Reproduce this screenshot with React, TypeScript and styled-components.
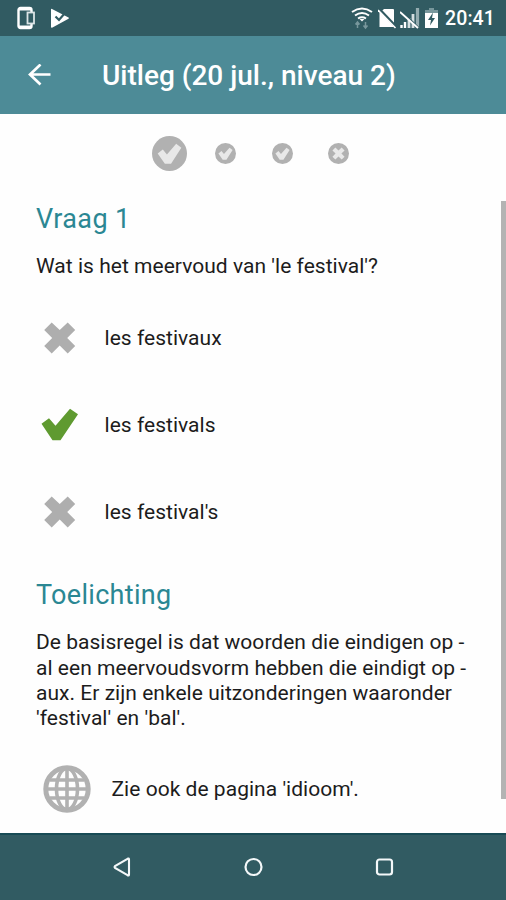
import React from "react";
import styled, { createGlobalStyle } from "styled-components";

const GlobalStyle = createGlobalStyle`
  html, body { margin: 0; padding: 0; background: #fdfdfd; }
  *, *::before, *::after { box-sizing: border-box; }
  svg { display: block; flex: none; }
`;

const Screen = styled.div`
  display: flex;
  flex-direction: column;
  width: 506px;
  height: 900px;
  background: #fefefe;
  color: #1c1c1c;
  font-family: Roboto, "Liberation Sans", sans-serif;
  overflow: hidden;
`;

const StatusBar = styled.header`
  display: flex;
  justify-content: space-between;
  flex: none;
  height: 36px;
  padding: 0 11px 0 16px;
  background: #315b62;
`;

const StatusGroup = styled.div<{ $gap: number }>`
  display: flex;
  align-items: center;
  gap: ${(p) => p.$gap}px;
`;

const Clock = styled.time`
  margin-left: 3px;
  padding-top: 2px;
  color: #fff;
  font-size: 19.5px;
  font-weight: 500;
  line-height: 36px;
  letter-spacing: 0.1px;
`;

const AppBar = styled.div`
  display: flex;
  align-items: center;
  flex: none;
  height: 78px;
  padding: 2px 0 0 27px;
  gap: 50px;
  background: #4d8b97;
`;

const Title = styled.h1`
  margin: 0;
  color: #fff;
  font-size: 28px;
  font-weight: 500;
  line-height: 32px;
  white-space: nowrap;
`;

const Pager = styled.div`
  display: flex;
  align-items: center;
  flex: none;
  height: 87px;
  padding: 0 0 8px 152px;
`;

const PagerDot = styled.span<{ $gap: number }>`
  margin-right: ${(p) => p.$gap}px;
`;

const ScrollArea = styled.main`
  display: flex;
  justify-content: space-between;
  flex: 1;
  min-height: 0;
`;

const Content = styled.div`
  width: 450px;
  padding-left: 36px;
`;

const ScrollThumb = styled.div`
  width: 5px;
  height: 598px;
  background: #b3b3b3;
`;

const Heading = styled.h2<{ $spacing: number }>`
  margin: 0;
  color: #2b8793;
  font-size: 27px;
  font-weight: 400;
  line-height: 36px;
  letter-spacing: ${(p) => p.$spacing}px;
`;

const Text = styled.p<{ $top?: number }>`
  margin: ${(p) => p.$top ?? 0}px 0 0;
  font-size: 21px;
  line-height: 25.3px;
  letter-spacing: 0.03px;
  white-space: nowrap;
`;

const Answers = styled.ul`
  margin: 16px 0 21px;
  padding: 0;
  list-style: none;
`;

const Answer = styled.li`
  display: flex;
  align-items: center;
  height: 87px;
  padding-left: 4px;
  gap: 24.5px;
`;

const Reference = styled.div`
  display: flex;
  align-items: center;
  height: 48px;
  margin-top: 34px;
  padding-left: 7px;
  gap: 20.5px;
`;

const NavBar = styled.nav`
  display: flex;
  align-items: center;
  justify-content: space-between;
  flex: none;
  height: 67px;
  padding: 0 111px 2px 111px;
  border-top: 2px solid #184b55;
  background: #315b62;
`;

const CHECK = "M0 15 L7.5 9.5 L14 17 L28.5 0 L36.5 5.5 L19 31.5 H11 Z";
const CROSS = "M0 7.5 L7.5 0 L15.5 7.5 L23.5 0 L31 7.5 L23 15.5 L31 23.5 L23.5 31 L15.5 23 L7.5 31 L0 23.5 L8 15.5 Z";

function Dot({ size, kind }: { size: number; kind: "check" | "cross" }) {
  return (
    <svg width={size} height={size} viewBox="0 0 34 34">
      <circle cx="17" cy="17" r="17" fill="#b1b1b1" />
      {kind === "check" ? (
        <path d="M5.5 17 L10.5 13 L14.5 18 L23.5 7.5 L28.5 11.5 L18.5 27 H12.5 Z" fill="#e8e8e8" />
      ) : (
        <path d={CROSS} transform="translate(7.2 7.2) scale(.633)" fill="#e8e8e8" />
      )}
    </svg>
  );
}

function Mark({ correct }: { correct: boolean }) {
  return (
    <svg width="40" height="36" viewBox="0 0 40 36">
      {correct ? (
        <path d={CHECK} transform="translate(1.5 .7)" fill="#5f9a30" />
      ) : (
        <path d={CROSS} transform="translate(4.2 1.5)" fill="#aeaeae" />
      )}
    </svg>
  );
}

function Globe() {
  return (
    <svg width="48" height="48" viewBox="0 0 48 48" fill="none" stroke="#b1b1b1" strokeWidth="3.6">
      <circle cx="24" cy="24" r="21.2" strokeWidth="5" />
      <ellipse cx="24" cy="24" rx="10.5" ry="20.5" />
      <path d="M24 3V45M4 24H44M7 15H41M7 33H41" />
    </svg>
  );
}

const answers = [
  { text: "les festivaux", correct: false },
  { text: "les festivals", correct: true },
  { text: "les festival's", correct: false },
];

export default function App() {
  return (
    <Screen>
      <GlobalStyle />
      <StatusBar>
        <StatusGroup $gap={14}>
          <svg width="20" height="24" viewBox="0 0 20 24" fill="none" stroke="#fff">
            <rect x="2.5" y="2" width="13" height="20" rx="2" strokeWidth="2.4" />
            <path d="M3 3H15M3 21H15" strokeWidth="3" />
            <rect x="11.5" y="6.5" width="6.5" height="11" fill="#315b62" stroke="#dbe4e6" strokeWidth="1.8" />
          </svg>
          <svg width="20" height="24" viewBox="0 0 20 24">
            <path d="M1 3.5Q1 2.5 2 3L18.5 11.5Q19.5 12 18.5 12.7L2.5 21.5Q1 22 1 21Z" fill="#fff" />
            <path d="M5.5 10.5L9 14L15 7" fill="none" stroke="#315b62" strokeWidth="2.2" />
          </svg>
        </StatusGroup>
        <StatusGroup $gap={3}>
          <svg width="24" height="24" viewBox="0 0 24 24" fill="none" stroke="#fff" strokeWidth="2">
            <path d="M1 6Q11 -1 21 6M4 9.5Q11 4.5 18 9.5M7 12.5Q11 10 15 12.5" />
            <path d="M8.5 13H13.5L11 15.5Z" fill="#fff" stroke="none" />
            <path d="M6.5 22V17M4.5 18.5L6.5 16L8.5 18.5M14.5 16V21M12.5 19.5L14.5 22L16.5 19.5" stroke="#78979c" strokeWidth="1.5" />
          </svg>
          <svg width="19" height="24" viewBox="0 0 19 24">
            <path d="M6 3H15Q16 3 16 4V21H1.5V7Z" fill="#fff" />
            <path d="M1.5 3.5L18.5 21.5" stroke="#315b62" strokeWidth="3" />
            <path d="M0 4L17.5 22" stroke="#fff" strokeWidth="1.6" />
          </svg>
          <svg width="21" height="24" viewBox="0 0 21 24">
            <path d="M1.5 19v3M5 16v6" stroke="#fff" strokeWidth="2.4" />
            <path d="M9 12v10M13 8v14" stroke="#d5dfe1" strokeWidth="2.8" />
            <path d="M17.5 2v20" stroke="#94acb0" strokeWidth="3.2" />
            <path d="M2 6L18.5 22" stroke="#315b62" strokeWidth="2.4" />
            <path d="M0 6L18 22" stroke="#fff" strokeWidth="1.8" />
          </svg>
          <svg width="15" height="24" viewBox="0 0 15 24">
            <path d="M5 2H10V4H14V8H1V4H5Z" fill="#78979c" />
            <path d="M1 7H14V22H1Z" fill="#fff" />
            <path d="M9 6.5L4 14H7L6 19.5L11 12H8Z" fill="#315b62" />
          </svg>
          <Clock>20:41</Clock>
        </StatusGroup>
      </StatusBar>
      <AppBar>
        <svg width="25" height="24" viewBox="0 0 25 24" fill="none" stroke="#fff" strokeWidth="2.7">
          <path d="M23.5 10.5H3M13.5 .5L3 10.5L13.5 20.5" />
        </svg>
        <Title>Uitleg (20 jul., niveau 2)</Title>
      </AppBar>
      <Pager>
        <PagerDot $gap={28}><Dot size={35} kind="check" /></PagerDot>
        <PagerDot $gap={35.5}><Dot size={21} kind="check" /></PagerDot>
        <PagerDot $gap={35.5}><Dot size={21} kind="check" /></PagerDot>
        <PagerDot $gap={0}><Dot size={21} kind="cross" /></PagerDot>
      </Pager>
      <ScrollArea>
        <Content>
          <Heading $spacing={0.4}>Vraag 1</Heading>
          <Text $top={17}>Wat is het meervoud van 'le festival'?</Text>
          <Answers>
            {answers.map((a) => (
              <Answer key={a.text}>
                <Mark correct={a.correct} />
                <Text>{a.text}</Text>
              </Answer>
            ))}
          </Answers>
          <Heading $spacing={0.3}>Toelichting</Heading>
          <Text $top={17}>
            De basisregel is dat woorden die eindigen op -<br />
            al een meervoudsvorm hebben die eindigt op -<br />
            aux. Er zijn enkele uitzonderingen waaronder<br />
            'festival' en 'bal'.
          </Text>
          <Reference>
            <Globe />
            <Text>Zie ook de pagina 'idioom'.</Text>
          </Reference>
        </Content>
        <ScrollThumb />
      </ScrollArea>
      <NavBar>
        <svg width="22" height="22" viewBox="0 0 22 22" fill="none" stroke="#f4f8f9" strokeWidth="2.1">
          <path d="M18 3.5V18.5Q18 20 16.5 19.2L4 12Q3 11 4 10L16.5 2.8Q18 2 18 3.5Z" />
        </svg>
        <svg width="22" height="22" viewBox="0 0 22 22" fill="none" stroke="#f4f8f9" strokeWidth="2.2">
          <circle cx="11.5" cy="11" r="8" />
        </svg>
        <svg width="22" height="22" viewBox="0 0 22 22" fill="none" stroke="#f4f8f9" strokeWidth="2.2">
          <rect x="4" y="3.5" width="15" height="15" rx="2.5" />
        </svg>
      </NavBar>
    </Screen>
  );
}
